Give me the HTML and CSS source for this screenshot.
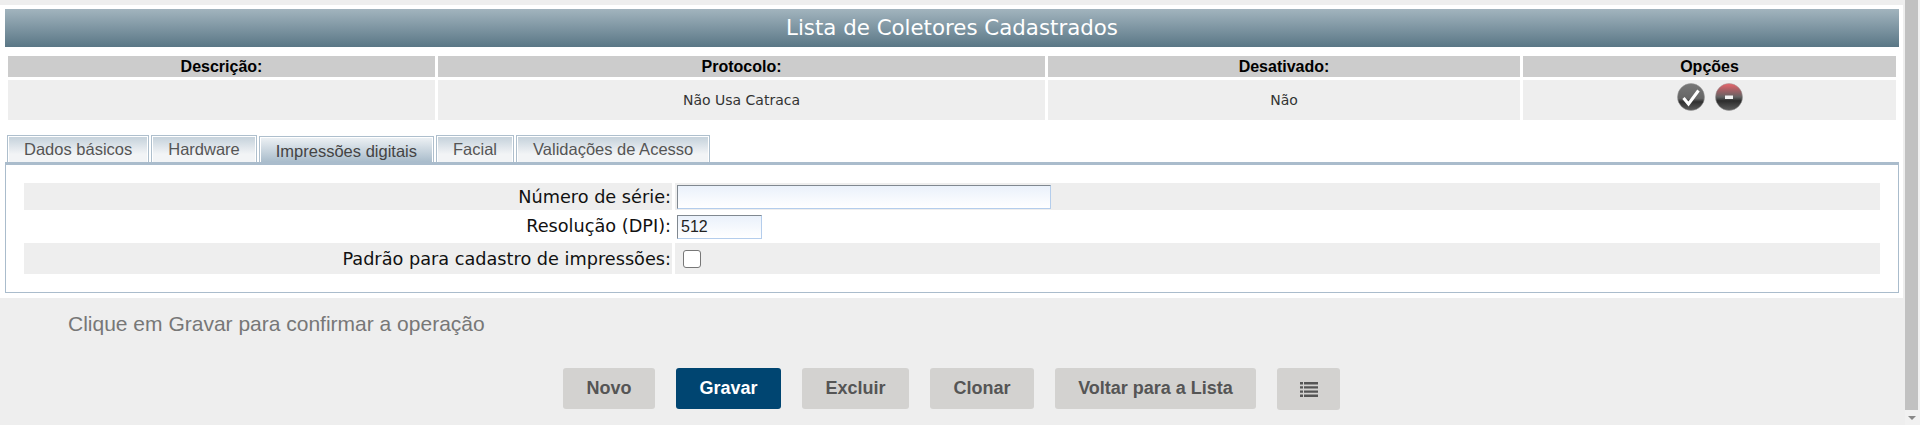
FILE: index.html
```html
<!DOCTYPE html>
<html lang="pt-BR">
<head>
	<meta charset="UTF-8">
	<title>Lista de Coletores Cadastrados</title>
	<link rel="stylesheet" href="styles.css">
</head>
<body>
	<div class="page">
		<div class="main">
			<div class="panel">
				<h1 class="title">Lista de Coletores Cadastrados</h1>
				<div class="list">
					<div class="list_head">Descrição:</div>
					<div class="list_head">Protocolo:</div>
					<div class="list_head">Desativado:</div>
					<div class="list_head">Opções</div>
					<div class="list_cell"></div>
					<div class="list_cell">Não Usa Catraca</div>
					<div class="list_cell">Não</div>
					<div class="list_cell list_options">
						<svg class="opt_icon" viewBox="0 0 28 28">
							<defs>
								<linearGradient id="okFill" x1="0" y1="0" x2="0" y2="1">
									<stop offset="0" stop-color="#777"/>
									<stop offset="0.55" stop-color="#666"/>
									<stop offset="0.68" stop-color="#303030"/>
									<stop offset="1" stop-color="#5e5e5e"/>
								</linearGradient>
								<linearGradient id="delFill" x1="0" y1="0" x2="0" y2="1">
									<stop offset="0" stop-color="#ec666c"/>
									<stop offset="0.25" stop-color="#a46065"/>
									<stop offset="0.5" stop-color="#636363"/>
									<stop offset="0.64" stop-color="#2c2c2c"/>
									<stop offset="1" stop-color="#5e5e5e"/>
								</linearGradient>
							</defs>
							<circle cx="14" cy="14" r="13.5" fill="url(#okFill)" stroke="#999" stroke-opacity="0.5"/>
							<path d="M6.5 15 L11.5 21 L21.5 7.5" fill="none" stroke="#fff" stroke-width="3"/>
						</svg>
						<svg class="opt_icon" viewBox="0 0 28 28">
							<circle cx="14" cy="14" r="13.5" fill="url(#delFill)" stroke="#999" stroke-opacity="0.5"/>
							<rect x="10" y="12.5" width="8" height="3.5" fill="#f4f4f4"/>
						</svg>
					</div>
				</div>
				<div class="tabs">
					<span class="tab">Dados básicos</span>
					<span class="tab">Hardware</span>
					<span class="tab tab_on">Impressões digitais</span>
					<span class="tab">Facial</span>
					<span class="tab">Validações de Acesso</span>
				</div>
				<div class="tab_box">
					<div class="form_row form_row1">
						<label class="form_label">Número de série:</label>
						<div class="form_field"><input class="txt txt_long" type="text"></div>
					</div>
					<div class="form_row form_row2 form_plain">
						<label class="form_label">Resolução (DPI):</label>
						<div class="form_field"><input class="txt txt_short" type="text" value="512"></div>
					</div>
					<div class="form_row form_row3">
						<label class="form_label">Padrão para cadastro de impressões:</label>
						<div class="form_field"><input class="chk" type="checkbox"></div>
					</div>
				</div>
			</div>
			<p class="hint">Clique em Gravar para confirmar a operação</p>
			<div class="buttons">
				<a class="btn btn_novo">Novo</a>
				<a class="btn btn_main">Gravar</a>
				<a class="btn btn_excluir">Excluir</a>
				<a class="btn btn_clonar">Clonar</a>
				<a class="btn btn_voltar">Voltar para a Lista</a>
				<a class="btn btn_icon">
					<svg class="list_icon" viewBox="0 0 18 15">
						<path d="M0 0h3v2.4H0zM4 0h14v2.4H4zM0 4.2h3v2.4H0zM4 4.2h14v2.4H4zM0 8.4h3v2.4H0zM4 8.4h14v2.4H4zM0 12.6h3V15H0zM4 12.6h14V15H4z" fill="#555"/>
					</svg>
				</a>
			</div>
		</div>
		<div class="scroll_track">
			<div class="scroll_thumb"></div>
			<div class="scroll_arrow"></div>
		</div>
	</div>
</body>
</html>
```

FILE: styles.css
```css
*{margin:0;padding:0;box-sizing:border-box;}
html,body{height:100%;overflow:hidden;}
body{background:#eee;font-family:"Liberation Sans",Arial,sans-serif;}
.page{display:flex;height:425px;}
.main{width:1905px;padding-top:5px;}
.panel{width:1903px;height:293px;background:#fff;padding:4px 4px 0 5px;}

.title{height:38px;background:linear-gradient(#a2b4be,#5a7786);color:#fff;font:normal 21.33px/38px "DejaVu Sans",sans-serif;text-align:center;}

.list{display:grid;grid-template-columns:427px 607px 472px 373px;column-gap:3px;row-gap:3px;margin:9px 0 0 3px;width:1888px;}
.list_head{height:21px;background:#ccc;color:#000;font-size:16px;font-weight:bold;line-height:21px;text-align:center;}
.list_cell{height:40px;background:#eee;color:#333;font:14px/40px "DejaVu Sans",sans-serif;text-align:center;}
.list_options{display:flex;justify-content:center;align-items:flex-start;gap:10px;padding-top:3px;}
.opt_icon{width:28px;height:28px;display:block;}

.tabs{display:flex;gap:2px;margin-top:15px;padding-left:2px;height:27px;}
.tab{height:27px;padding:0 16px;border:1px solid #aebfcd;border-bottom:0;box-shadow:inset 1px 1px 0 #fff,inset -1px 0 0 #fff;background:linear-gradient(#c3d0da,#f2f4f6 70%);color:#555;font-size:16.5px;line-height:27px;}
.tab_on{margin-top:1px;height:26px;background:linear-gradient(#eef2f5,#a9bccb);color:#444;line-height:28px;}

.tab_box{height:131px;border:1px solid #aabccc;border-top-width:3px;padding:18px 18px 0 18px;}
.form_row{display:flex;gap:3px;}
.form_row1{height:27px;}
.form_row2{height:33px;}
.form_row3{height:31px;}
.form_label{width:648px;background:#eee;color:#111;font:17.7px/29px "DejaVu Sans",sans-serif;text-align:right;padding-right:1px;white-space:nowrap;}
.form_row2 .form_label{line-height:33px;}
.form_row3 .form_label{line-height:33px;}
.form_field{flex:1;background:#eee;display:flex;align-items:center;padding-left:2px;}
.form_plain .form_label,.form_plain .form_field{background:#fff;}
.txt{height:24px;border:1px solid #b4cdec;border-top-color:#808890;border-left-color:#808890;background:linear-gradient(#eaf1fb,#fff);font:16px "Liberation Sans",Arial,sans-serif;color:#222;padding-left:3px;}
.txt_long{width:374px;}
.txt_short{width:85px;}
.chk{appearance:none;width:18px;height:18px;margin-left:6px;border:1px solid #777;border-radius:3px;background:#fff;}

.hint{margin:15px 0 0 68px;height:22px;color:#777;font-size:21px;line-height:22px;}

.buttons{display:flex;gap:21px;margin:33px 0 0 563px;align-items:flex-start;}
.btn{height:41px;background:#d3d2d0;color:#555;border-radius:3px;font-size:18px;font-weight:bold;line-height:41px;text-align:center;}
.btn_novo{width:92px;}
.btn_main{width:105px;background:#004571;color:#fff;}
.btn_excluir{width:107px;}
.btn_clonar{width:104px;}
.btn_voltar{width:201px;}
.btn_icon{width:63px;height:42px;display:flex;align-items:center;justify-content:center;}
.list_icon{width:18px;height:15px;display:block;}

.scroll_track{width:15px;height:425px;background:#f1f1f1;}
.scroll_thumb{width:13px;height:410px;background:#c1c1c1;}
.scroll_arrow{width:0;height:0;margin:6px 0 0 3px;border-left:4px solid transparent;border-right:4px solid transparent;border-top:4px solid #888;}
```
